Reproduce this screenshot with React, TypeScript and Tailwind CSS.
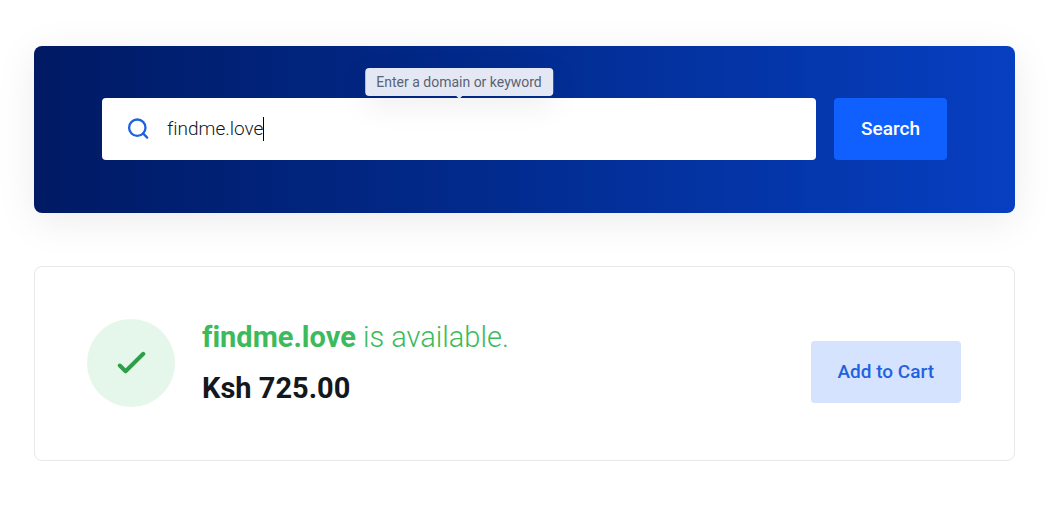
import { useState } from "react";

function SearchIcon() {
  return (
    <svg className="size-6 shrink-0" viewBox="0 0 24 24" fill="none" stroke="#1f62e0" strokeWidth="2.3" strokeLinecap="round" strokeLinejoin="round" aria-hidden="true">
      <circle cx="11.3" cy="10.7" r="8.2" />
      <path d="M21.2 20.6l-4.2-4.2" />
    </svg>
  );
}

function CheckBadge() {
  return (
    <span className="flex size-22 shrink-0 items-center justify-center rounded-full bg-[#e4f7ea]">
      <svg className="h-6 w-8" viewBox="0 0 32 24" fill="none" stroke="#2f9e4b" strokeWidth="4" strokeLinecap="round" strokeLinejoin="round" aria-hidden="true">
        <path d="M4.8 14.5L10.6 20.2L28.3 2.8" />
      </svg>
    </span>
  );
}

function SearchPanel() {
  const [domain, setDomain] = useState("findme.love");
  return (
    <form
      onSubmit={(event) => event.preventDefault()}
      className="flex gap-[18px] rounded-lg bg-linear-to-r from-[#001a64] to-[#073fc1] px-[68px] pt-[52px] pb-[53px] shadow-[0_8px_40px_rgba(0,0,0,0.08)]"
    >
      <label className="relative flex h-[62px] min-w-0 flex-1 cursor-text items-center rounded bg-white px-6">
        <SearchIcon />
        <input
          type="text"
          aria-label="Domain or keyword"
          value={domain}
          onChange={(event) => setDomain(event.target.value)}
          className="ml-[17px] min-w-px border-0 bg-transparent p-0 text-[19px] leading-7 font-light text-[#14171c] caret-transparent outline-none [field-sizing:content] [font-variant-ligatures:none]"
        />
        <span className="h-6 w-px bg-black" aria-hidden="true" />
        <span
          role="tooltip"
          className="absolute bottom-full left-1/2 mb-0.5 -translate-x-1/2 rounded bg-[#e4e8f4] px-[11px] py-1 text-sm leading-5 whitespace-nowrap text-[#5b6273] shadow-[0_8px_32px_rgba(0,0,0,0.08)] after:absolute after:top-full after:left-1/2 after:-translate-x-1/2 after:border-x-3 after:border-t-3 after:border-x-transparent after:border-t-[#e4e8f4]"
        >
          Enter a domain or keyword
        </span>
      </label>
      <button type="submit" className="h-[62px] cursor-pointer rounded bg-[#1060ff] px-[27px] text-[19px] font-medium text-white">
        Search
      </button>
    </form>
  );
}

function ResultCard() {
  return (
    <section className="mt-[53px] flex items-center justify-between rounded-lg border border-[#e7e8ea] bg-white px-[52px] pt-[52px] pr-[53px] pb-[53px]">
      <div className="flex gap-[27px]">
        <CheckBadge />
        <div className="flex flex-col gap-3.5 text-[29px] [font-variant-ligatures:none]">
          <h2 className="leading-9 font-light text-[#3dba5c]">
            <strong className="font-bold">findme.love</strong> is available.
          </h2>
          <p className="leading-[38px] font-bold text-[#14171c]">Ksh 725.00</p>
        </div>
      </div>
      <button type="button" className="mt-[18px] h-[62px] cursor-pointer rounded bg-[#d5e3ff] px-[27px] text-[19px] font-medium text-[#1f62e0]">
        Add to Cart
      </button>
    </section>
  );
}

export default function App() {
  return (
    <main className="min-h-screen bg-white pt-[46px] pr-9 pb-[51px] pl-[34px] font-[Roboto,sans-serif]">
      <SearchPanel />
      <ResultCard />
    </main>
  );
}
